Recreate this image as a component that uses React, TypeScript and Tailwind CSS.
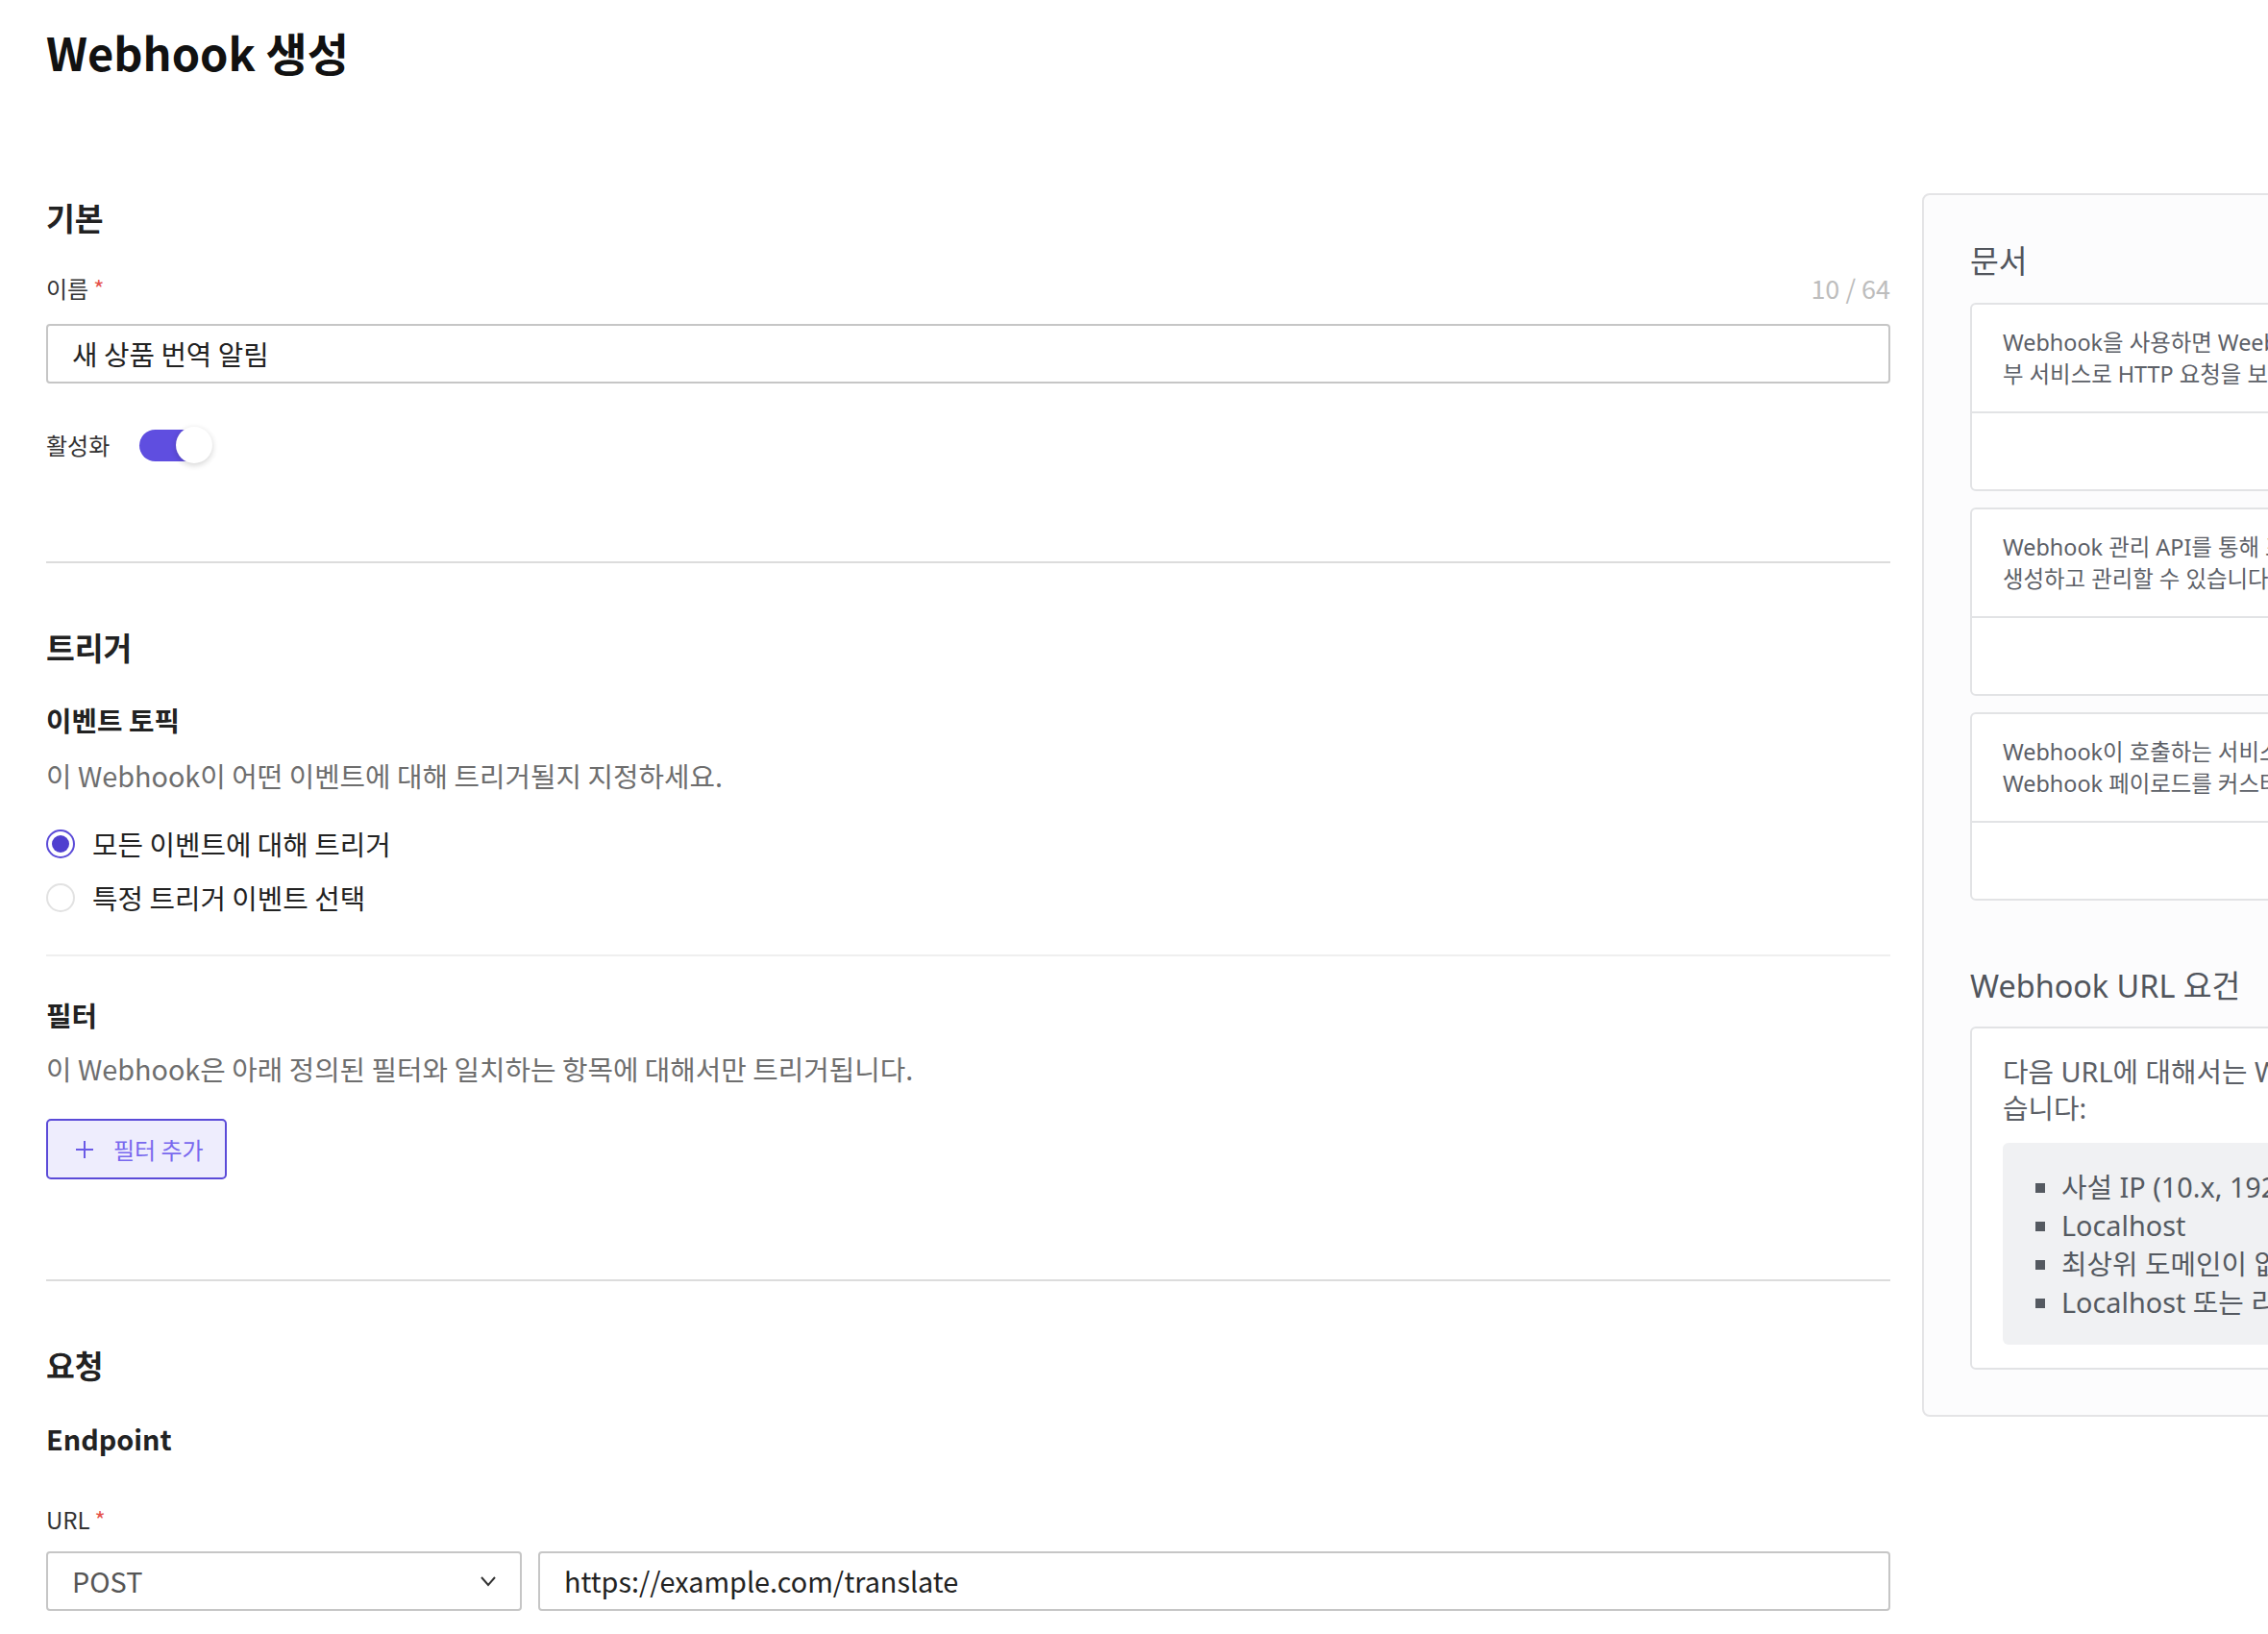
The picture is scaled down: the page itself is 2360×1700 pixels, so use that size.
import React from 'react';

function Toggle() {
  return (
    <div className="relative h-[40px] w-[76px]">
      <div className="absolute left-0 top-[4px] h-[33px] w-[70px] rounded-full bg-[#5f4ee0]" />
      <div className="absolute right-0 top-[1px] h-[38px] w-[38px] rounded-full bg-white shadow-[0_2px_6px_rgba(0,0,0,0.18)]" />
    </div>
  );
}

function Radio({ checked, label }: { checked?: boolean; label: string }) {
  return (
    <label className="flex h-[40px] items-center gap-[18px]">
      {checked ? (
        <span className="flex h-[30px] w-[30px] items-center justify-center rounded-full border-2 border-[#5b4bd8] bg-white">
          <span className="h-[18px] w-[18px] rounded-full bg-[#4f3fcf]" />
        </span>
      ) : (
        <span className="h-[30px] w-[30px] rounded-full border-2 border-[#e2e2e2] bg-white" />
      )}
      <span className="text-[28.8px] leading-[38px] text-[#222]">{label}</span>
    </label>
  );
}

function DocCard({ lines }: { lines: string[] }) {
  return (
    <div className="rounded-[6px] border-2 border-[#e2e3e5] bg-white">
      <p className="whitespace-nowrap border-b-2 border-[#e2e3e5] pl-[32px] pt-[23px] pb-[22px] text-[23.4px] leading-[33px] text-[#5c6067]">
        {lines[0]}
        <br />
        {lines[1]}
      </p>
      <div className="h-[79px]" />
    </div>
  );
}

export default function App() {
  return (
    <div className="h-[1700px] w-[2360px] overflow-hidden bg-white font-['Noto_Sans_CJK_KR',sans-serif]">
      <h1 className="pl-[48px] pt-[24px] text-[47px] font-bold leading-[60px] text-[#111]">Webhook 생성</h1>

      <div className="mt-[117px] flex items-start pl-[48px]">
        {/* 왼쪽: 폼 */}
        <main className="w-[1919px] shrink-0 pt-[5px]">
          <h2 className="text-[32.4px] font-bold leading-[40px] text-[#222]">기본</h2>

          <div className="mt-[37px] flex h-[34px] items-center justify-between">
            <span className="text-[24px] leading-[32px] text-[#333]">
              이름<span className="ml-[5px] text-[#e5534b]">*</span>
            </span>
            <span className="text-[27px] text-[#bdbdbd]">10 / 64</span>
          </div>
          <div className="mt-[20px] flex h-[62px] items-center rounded-[4px] border-2 border-[#c6c6c6] pl-[25px] text-[28.8px] text-[#222]">
            새 상품 번역 알림
          </div>

          <div className="mt-[44px] flex h-[40px] items-center gap-[31px]">
            <span className="text-[24px] text-[#333]">활성화</span>
            <Toggle />
          </div>

          <div className="mt-[101px] h-[2px] bg-[#dcdcdc]" />

          <h2 className="mt-[67px] text-[32.4px] font-bold leading-[40px] text-[#222]">트리거</h2>
          <h3 className="mt-[38px] text-[28.8px] font-bold leading-[36px] text-[#222]">이벤트 토픽</h3>
          <p className="mt-[21px] text-[28.8px] leading-[38px] text-[#6e6e6e]">
            이 Webhook이 어떤 이벤트에 대해 트리거될지 지정하세요.
          </p>
          <div className="mt-[32px] flex flex-col gap-[16px]">
            <Radio checked label="모든 이벤트에 대해 트리거" />
            <Radio label="특정 트리거 이벤트 선택" />
          </div>

          <div className="mt-[39px] h-[2px] bg-[#efefef]" />

          <h3 className="mt-[43px] text-[28.8px] font-bold leading-[36px] text-[#222]">필터</h3>
          <p className="mt-[19px] text-[28.8px] leading-[38px] text-[#6e6e6e]">
            이 Webhook은 아래 정의된 필터와 일치하는 항목에 대해서만 트리거됩니다.
          </p>
          <button className="mt-[33px] flex h-[63px] items-center gap-[20px] rounded-[5px] border-2 border-[#5b4bd8] bg-[#eeedfd] pl-[28px] pr-[22px] text-[24px] text-[#7868ee]">
            <svg width="20" height="20" viewBox="0 0 20 20" fill="none" stroke="#6a5ae6" strokeWidth="2">
              <path d="M10 1v18M1 10h18" />
            </svg>
            필터 추가
          </button>

          <div className="mt-[104px] h-[2px] bg-[#dcdcdc]" />

          <h2 className="mt-[67px] text-[32.4px] font-bold leading-[40px] text-[#222]">요청</h2>
          <h3 className="mt-[39px] text-[28.8px] font-bold leading-[36px] text-[#222]">Endpoint</h3>
          <div className="mt-[50px] text-[24px] leading-[32px] text-[#333]">
            URL<span className="ml-[5px] text-[#e5534b]">*</span>
          </div>
          <div className="mt-[17px] flex gap-[17px]">
            <div className="flex h-[62px] w-[495px] shrink-0 items-center justify-between rounded-[4px] border-2 border-[#c6c6c6] pl-[25px] pr-[24px] text-[28.8px] text-[#555]">
              POST
              <svg width="18" height="12" viewBox="0 0 18 12" fill="none" stroke="#333" strokeWidth="2">
                <path d="M2 2l7 8 7-8" />
              </svg>
            </div>
            <div className="flex h-[62px] flex-1 items-center rounded-[4px] border-2 border-[#c6c6c6] pl-[25px] text-[28.8px] text-[#222]">
              https://example.com/translate
            </div>
          </div>
        </main>

        {/* 오른쪽: 문서 패널 */}
        <aside className="ml-[33px] w-[900px] shrink-0 rounded-[8px] border-2 border-[#e4e4e6] bg-[#fcfcfd] px-[48px] pt-[48px] pb-[47px] font-['Noto_Sans','Noto_Sans_CJK_KR',sans-serif]">
          <h2 className="text-[32.4px] leading-[40px] text-[#51555c]">문서</h2>
          <div className="mt-[24px] flex flex-col gap-[17px]">
            <DocCard
              lines={[
                'Webhook을 사용하면 Weebly 스토어에서 이벤트가 발생할 때 외',
                '부 서비스로 HTTP 요청을 보낼 수 있습니다.',
              ]}
            />
            <DocCard
              lines={[
                'Webhook 관리 API를 통해 프로그래밍 방식으로 Webhook을',
                '생성하고 관리할 수 있습니다.',
              ]}
            />
            <DocCard
              lines={[
                'Webhook이 호출하는 서비스에 맞게 요청 본문을 구성하려면',
                'Webhook 페이로드를 커스터마이즈하세요.',
              ]}
            />
          </div>

          <h2 className="mt-[68px] text-[32.4px] leading-[40px] text-[#51555c]">Webhook URL 요건</h2>
          <div className="mt-[23px] rounded-[6px] border-2 border-[#e2e3e5] bg-white px-[32px] pt-[26px] pb-[24px]">
            <p className="whitespace-nowrap text-[28.8px] leading-[38px] text-[#5c6067]">
              다음 URL에 대해서는 Webhook을 생성할 수 없
              <br />
              습니다:
            </p>
            <ul className="mt-[17px] list-[square] whitespace-nowrap rounded-[6px] bg-[#f0f1f3] pt-[26px] pb-[24px] pl-[61px] text-[28.8px] leading-[40px] text-[#555a61]">
              <li>사설 IP (10.x, 192.168.x.x, 172.16.x.x)</li>
              <li>Localhost</li>
              <li>최상위 도메인이 없는 URL</li>
              <li>Localhost 또는 리디렉션되는 URL</li>
            </ul>
          </div>
        </aside>
      </div>
    </div>
  );
}
